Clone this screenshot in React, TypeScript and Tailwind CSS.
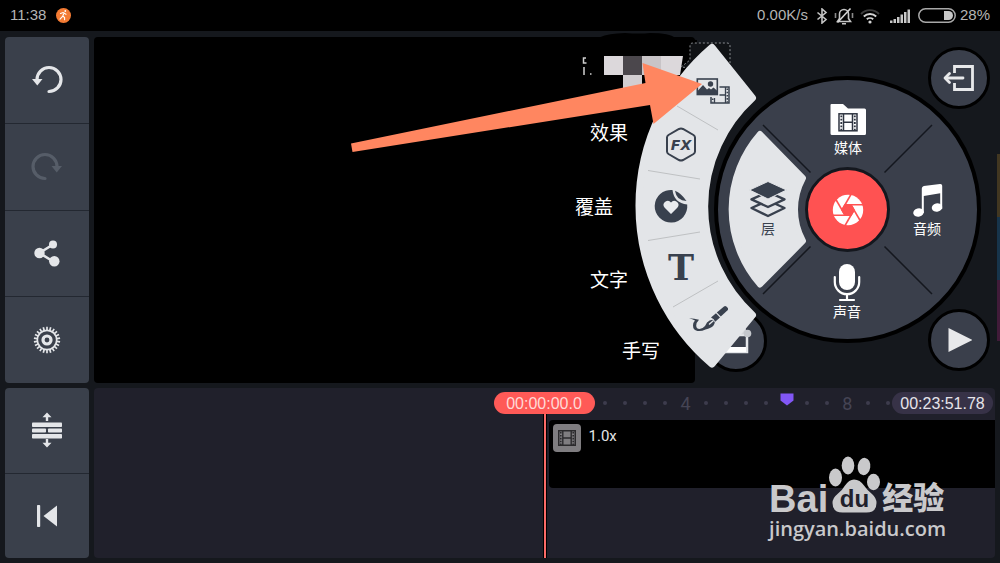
import React, { useState } from 'react';

interface IconProps {
  className?: string;
}

const UndoIcon: React.FC<IconProps> = ({ className }) => (
  <svg width="32" height="32" viewBox="0 0 32 32" className={className}>
    <path d="M18 27.5a12 12 0 1 0-12-12" fill="none" stroke="currentColor" strokeWidth="3.2" strokeLinecap="round" />
    <path d="M1 15h10.500l-5.200 6.500z" fill="currentColor" />
  </svg>
);

const ShareIcon = () => (
  <svg width="28" height="28" viewBox="0 0 28 28" fill="currentColor">
    <path d="M20 5.5L6.5 14 21 23" fill="none" stroke="currentColor" strokeWidth="2.6" />
    <circle cx="20" cy="5.5" r="4" />
    <circle cx="6.5" cy="14" r="5.2" />
    <circle cx="21.3" cy="22.3" r="5.2" />
  </svg>
);

const GearIcon = () => (
  <svg width="28" height="28" viewBox="0 0 28 28" fill="none" stroke="currentColor">
    {Array.from({ length: 22 }, (_, i) => (
      <path key={i} d="M14 0.8v3.4" strokeWidth="1.7" transform={`rotate(${(i * 360) / 22} 14 14)`} />
    ))}
    <circle cx="14" cy="14" r="9.7" strokeWidth="1.7" />
    <circle cx="14" cy="14" r="4" strokeWidth="3.2" />
  </svg>
);

const TrackHeightIcon = () => (
  <svg width="30" height="36" viewBox="0 0 30 36" fill="currentColor">
    <path d="M15 0.5l4.5 4.7h-3.3V9h-2.4V5.2h-3.3zM15 35.5l4.5-4.7h-3.3V27h-2.4v3.800h-3.3z" />
    <rect x="0" y="10.5" width="30" height="4.5" rx="0.8" />
    <rect x="0" y="16.5" width="14" height="4" rx="0.8" />
    <rect x="16" y="16.5" width="14" height="4" rx="0.8" />
    <rect x="0" y="22" width="30" height="4.5" rx="0.8" />
  </svg>
);

const ToStartIcon = () => (
  <svg width="22" height="22" viewBox="0 0 22 22" fill="currentColor">
    <rect x="1" y="0" width="3.2" height="22" rx="0.8" />
    <path d="M21 0.5v21L7.5 11z" />
  </svg>
);

const FilmIcon: React.FC<IconProps> = ({ className }) => (
  <svg width="18" height="16" viewBox="0 0 18 16" fill="none" stroke="currentColor" className={className}>
    <rect x="0.75" y="0.75" width="16.5" height="14.5" strokeWidth="1.5" />
    <path d="M4.8 1v14M13.2 1v14M5 8h8" strokeWidth="1.4" />
    <path d="M2.8 2v13M15.2 2v13" strokeWidth="1.6" strokeDasharray="1.6 1.3" />
  </svg>
);

// Wheel icons, all on a 40x36 canvas
const FolderIcon = () => (
  <svg width="40" height="36" viewBox="0 0 40 36">
    <path d="M3.5 4h11.5l5 4.5h16.5a1.5 1.5 0 0 1 1.5 1.5v23.5a1.5 1.5 0 0 1-1.5 1.5H4a1.5 1.5 0 0 1-1.5-1.5V5a1 1 0 0 1 1-1z" fill="#fff" />
    <g fill="none" stroke="#2f3541">
      <rect x="11" y="13.8" width="18" height="17" strokeWidth="1.5" />
      <path d="M15.5 14v17M24.5 14v17M15.5 22.3h9" strokeWidth="1.5" />
      <path d="M13.3 15.5v15M26.8 15.5v15" strokeWidth="1.8" strokeDasharray="1.8 1.5" />
    </g>
  </svg>
);

// Solid upper beam, hollow gap between the two stems
const MusicIcon = () => (
  <svg width="40" height="36" viewBox="0 0 40 36" fill="#fff">
    <path d="M14.8 7.5Q14.8 5.500 16.8 5L33 3q2.200-.2 2.200 1.800V28h-2V12.300L16.800 15v17h-2z" />
    <ellipse cx="11.5" cy="31.5" rx="5.300" ry="4.200" transform="rotate(-15 11.5 31.5)" />
    <ellipse cx="30" cy="26.5" rx="5.300" ry="4.200" transform="rotate(-15 30 26.5)" />
  </svg>
);

const MicIcon = () => (
  <svg width="40" height="36" viewBox="0 0 40 36" className="overflow-visible">
    <rect x="12" y="0" width="16" height="26" rx="8" fill="#fff" />
    <path d="M7.8 13v5a12.2 12.2 0 0 0 24.4 0v-5M20 30.5v5M13 36h14" fill="none" stroke="#fff" strokeWidth="2.2" strokeLinecap="round" />
  </svg>
);

const LayersIcon = () => (
  <svg width="40" height="36" viewBox="0 0 40 36" className="overflow-visible">
    <g stroke="#39414e" strokeWidth="2.4" fill="#e3e5e8" strokeLinejoin="round">
      <path d="M20 19.5L36.5 27 20 35 3.5 27z" />
      <path d="M20 11L36.5 18.3 20 26 3.5 18.3z" />
    </g>
    <path d="M20 0.5L38.5 9 20 18 1.5 9z" fill="#39414e" stroke="#e3e5e8" strokeWidth="1" />
  </svg>
);

// Fan icons, all on a 40x40 canvas
const LayerMediaIcon = () => (
  <svg width="40" height="40" viewBox="0 0 40 40">
    <g fill="none" stroke="#39414e">
      <rect x="18" y="16" width="18" height="16" strokeWidth="1.5" />
      <path d="M21.5 27v5M32.5 16v16M26 24h6" strokeWidth="1.3" />
      <path d="M19.7 27.5v4M34.3 17.5v14" strokeWidth="1.6" strokeDasharray="1.6 1.6" />
    </g>
    <rect x="3" y="7" width="23.5" height="19" fill="#e3e5e8" />
    <rect x="4.3" y="8" width="20" height="15.5" fill="#e3e5e8" stroke="#39414e" strokeWidth="1.6" />
    <path d="M5 19.5l5-5.5 4 4.5 2-1.5 2 1.5 2.5-2 4 3.5v4H5z" fill="#39414e" />
    <circle cx="17.5" cy="13" r="2.7" fill="#39414e" />
  </svg>
);

const EffectIcon = () => (
  <svg width="40" height="40" viewBox="0 0 40 40">
    <path d="M20 4.5q1 0 2 .5l10.500 6q1.500 1 1.500 2.500v14q0 1.500-1.500 2.500L22 36q-2 1-4 0L7.500 30Q6 29 6 27.500v-14Q6 12 7.500 11L18 5q1-.5 2-.5z" fill="none" stroke="#39414e" strokeWidth="2" />
    <text x="20" y="25.500" textAnchor="middle" fill="#39414e" fontSize="14" fontWeight="700" fontStyle="italic" fontFamily="DejaVu Sans, sans-serif">FX</text>
  </svg>
);

const StickerIcon = () => (
  <svg width="40" height="40" viewBox="0 0 40 40">
    <path d="M21.500 4A16.300 16.300 0 1 0 36.200 18.500Q23 17 21.500 4z" fill="#39414e" />
    <path d="M24 4.800Q30 7 35.500 15 25.500 15 24 4.800z" fill="#39414e" />
    <path d="M20 28l-6.500-6.500a4 4 0 0 1 6.500-5 4 4 0 0 1 6.500 5z" fill="#e9ebee" />
  </svg>
);

const TextIcon = () => (
  <svg width="40" height="40" viewBox="0 0 40 40">
    <text x="20" y="33" textAnchor="middle" fill="#39414e" fontSize="35" fontWeight="700" fontFamily="DejaVu Serif, Liberation Serif, serif">T</text>
  </svg>
);

const BrushIcon = () => (
  <svg width="40" height="40" viewBox="0 0 40 40" fill="#39414e">
    <path d="M1 17.200q5.500 0 10 1.600-3 3-2.800 6 .3 3.200 3.300 3.200 3 0 5.500-3l2-3.500q2.500-2.500 5.500-2.700l2.300 2.200q-.3 3.500-3.800 5.500-3 1.500-5.500 2-4 2-8 1.500-4.500-.8-4.500-5.500 0-3 2-5Q4.500 18 1 17.200z" />
    <path d="M23 16.500l5-4.200 4 4.200-4.800 4.300q-1-3-4.200-4.300z" />
    <path d="M28.800 11.500L36 5.400q1.200-.9 2.400.1l1.400 1.500q.8 1.200-.2 2.200L32.800 15.600z" />
    <path d="M21.500 23l3.500-3" stroke="#e3e5e8" strokeWidth="1.500" strokeLinecap="round" />
  </svg>
);

const ExitIcon = () => (
  <svg width="32" height="28" viewBox="0 0 32 28" fill="none" stroke="#e8e9eb" strokeWidth="2.8">
    <path d="M11.500 9V2.500h18v23h-18V19" />
    <path d="M3 14h17" strokeLinecap="round" />
    <path d="M6.500 9.500L2 14l4.500 4.500" strokeLinecap="round" strokeLinejoin="round" />
  </svg>
);

const ApertureIcon = () => (
  <svg width="32" height="32" viewBox="-16 -16 32 32">
    <circle r="15.2" fill="#fff" />
    <g stroke="#ff5252" strokeWidth="1.600" fill="#ff5252">
      <path d="M6 0L3 5.200h-6L-6 0l3-5.200h6z" />
      {[0, 60, 120, 180, 240, 300].map((deg) => (
        <path key={deg} d="M6 0L-3.200 16" transform={`rotate(${deg})`} />
      ))}
    </g>
  </svg>
);

const StatusBar = () => (
  <header className="flex h-[31px] items-center justify-between bg-black px-2.5 font-['Liberation_Sans',sans-serif] text-[15px] text-[#b4b4b4]">
    <div className="flex items-center gap-2.5">
      <span>11:38</span>
      <svg width="15" height="15" viewBox="0 0 15 15">
        <circle cx="7.5" cy="7.5" r="7.5" fill="#f47b33" />
        <path d="M4.500 5.500L7 4.500l3 1.800M8 4.800L6.800 8l1.800 1.500v2.300M6.800 8.200L4 11.200" fill="none" stroke="#fff" strokeWidth="1.100" strokeLinecap="round" />
        <circle cx="9.3" cy="3" r="0.9" fill="#fff" />
      </svg>
    </div>
    <div className="flex items-center">
      <span>0.00K/s</span>
      <svg width="12" height="16" viewBox="0 0 12 16" className="ml-2" fill="none" stroke="#c4c4c4" strokeWidth="1.6">
        <path d="M1.500 4.500l8.500 7-4 3.500V1l4 3.500-8.500 7" />
      </svg>
      <svg width="20" height="18" viewBox="0 0 20 18" className="ml-1.5" fill="none" stroke="#c4c4c4" strokeWidth="1.6">
        <path d="M3.500 14.500h13l-2-3V7a4.500 4.500 0 0 0-9 0v4.500zM8 16.800h4" />
        <path d="M1.500 6v5M18.500 6v5" stroke="#8a8a8a" />
        <path d="M16.500 1.500l-13 14" stroke="#d4d4d4" />
      </svg>
      <svg width="20" height="16" viewBox="0 0 20 16" className="ml-1.5" fill="none" stroke="#d4d4d4" strokeWidth="1.9">
        <path d="M1 6a12.500 12.500 0 0 1 18 0" stroke="#3c3c3c" />
        <path d="M3.800 8.500a9 9 0 0 1 12.400 0M6.800 11.300a4.800 4.800 0 0 1 6.400 0" />
        <circle cx="10" cy="14" r="1.6" fill="#d4d4d4" stroke="none" />
      </svg>
      <svg width="20" height="15" viewBox="0 0 20 15" className="ml-2.5" fill="#c8c8c8">
        <rect x="0" y="12.5" width="2.5" height="2.5" />
        <rect x="3.5" y="11" width="2.5" height="4" />
        <rect x="7" y="9" width="2.5" height="6" />
        <rect x="10.5" y="6.5" width="2.5" height="8.5" />
        <rect x="14" y="4" width="2.5" height="11" />
        <rect x="17.5" y="1.5" width="2.5" height="13.5" />
      </svg>
      <svg width="38" height="15" viewBox="0 0 38 15" className="ml-2 mr-1">
        <rect x="0.8" y="0.8" width="36.4" height="13.4" rx="6.7" fill="none" stroke="#a8a8a8" strokeWidth="1.5" />
        <path d="M26 3h4.500a4.500 4.500 0 0 1 0 9H26z" fill="#c8c8c8" />
      </svg>
      <span>28%</span>
    </div>
  </header>
);

const toolButton =
  'flex flex-1 items-center justify-center border-b border-[#232831] bg-[#3a404b] text-[#e4e6e9] last:border-b-0';

const fanItems = [
  { id: 'effect', label: '效果', Icon: EffectIcon, button: 'left-[321px] top-[93px]', text: 'left-[250px] top-[91px]' },
  { id: 'overlay', label: '覆盖', Icon: StickerIcon, button: 'left-[311px] top-[155px]', text: 'left-[235px] top-[165px]' },
  { id: 'text', label: '文字', Icon: TextIcon, button: 'left-[321px] top-[216px]', text: 'left-[250px] top-[238px]' },
  { id: 'handwriting', label: '手写', Icon: BrushIcon, button: 'left-[348px] top-[270px]', text: 'left-[282px] top-[309px]' },
];

const wheelItems = [
  { id: 'media', label: '媒体', Icon: FolderIcon, position: 'left-[476px] top-[69px] text-white' },
  { id: 'audio', label: '音频', Icon: MusicIcon, position: 'left-[555px] top-[150px] text-white' },
  { id: 'voice', label: '声音', Icon: MicIcon, position: 'left-[475px] top-[233px] text-white' },
  { id: 'layer', label: '层', Icon: LayersIcon, position: 'left-[396px] top-[150px] text-[#39414e]' },
];

const roundButton =
  'absolute flex h-[62px] w-[62px] items-center justify-center rounded-full border-[3px] border-black bg-[#3a3f4b]';

const RadialMenu = () => (
  <div className="pointer-events-none absolute right-0 top-0 h-[354px] w-[660px]">
    {/* Mosaic and painted-over label */}
    <svg className="absolute inset-0" width="660" height="354" viewBox="340 31 660 354">
      <path d="M590 48Q592 34 625 33q15 1 25 0 20 0 25 5l22 2v25H590z" fill="#000" />
      <path d="M586 58h-2.500v5h3M584 67v8M590 74h1.500" stroke="#d0d0d0" strokeWidth="1.500" fill="none" />
      <rect x="604" y="56" width="19" height="19" fill="#dcd8db" />
      <rect x="623" y="56" width="19" height="19" fill="#4b474c" />
      <rect x="642" y="56" width="19" height="19" fill="#c8c4c7" />
      <path d="M661 56h22l-3 19h-19z" fill="#dcd8db" />
      <rect x="623" y="75" width="19" height="20" fill="#d2ced1" />
      <path d="M681 67l9-7V46q0-3 3-3h34q3 0 3 3v22h-40z" fill="#101215" stroke="#8b8e92" strokeDasharray="2 2" />
      <rect x="997" y="154" width="3" height="63" fill="#423721" />
      <rect x="997" y="217" width="3" height="63" fill="#17344b" />
      <rect x="997" y="280" width="3" height="61" fill="#411b39" />
    </svg>

    <button aria-label="Capture frame" className={`${roundButton} pointer-events-auto left-[365px] top-[279px]`}>
      <svg width="32" height="32" viewBox="0 0 32 32">
        <path d="M4 10h23v17H4z" fill="none" stroke="#e4e6e9" strokeWidth="2.500" />
        <path d="M4 22h22v5H4z" fill="#fff" />
        <circle cx="22" cy="5.5" r="4" fill="#d4d6da" />
        <circle cx="27.5" cy="8.500" r="3.800" fill="#c4c7cc" />
      </svg>
    </button>

    {/* Wheel, selected slice and fan */}
    <svg className="absolute inset-0" width="660" height="354" viewBox="340 31 660 354">
      <circle cx="847.5" cy="209.5" r="131.5" fill="#3a3f4b" stroke="#000" strokeWidth="4" />
      <path d="M763 125l47.500 47.500M932 125l-47.500 47.500M763 294l47.500-47.500M932 294l-47.500-47.500" stroke="#14171e" strokeWidth="1.5" />
      <path
        d="M760 134L803 178A66 66 0 0 0 803 241L760 284.500A114 114 0 0 1 760 134z"
        fill="#e3e5e8" stroke="#e3e5e8" strokeWidth="6" strokeLinejoin="round"
      />
      <path
        d="M712 47.500L752.500 98A147 147 0 0 0 752.500 315L712 364A208 208 0 0 1 712 47.500z"
        fill="#e3e5e8" stroke="#e3e5e8" strokeWidth="7" strokeLinejoin="round"
      />
      <path d="M677 106l41 24M648 170.500l52 8.500M648 240.500l52-8.500M673 307l45-26" stroke="#bfc1c3" strokeWidth="1" />
    </svg>

    <button aria-label="Exit" className={`${roundButton} pointer-events-auto left-[588px] top-[16px]`}>
      <ExitIcon />
    </button>
    <button aria-label="Play" className={`${roundButton} pointer-events-auto left-[588px] top-[278px]`}>
      <svg width="26" height="26" viewBox="0 0 26 26" fill="#e8e9eb">
        <path d="M2.500 1l24 12-24 12z" />
      </svg>
    </button>

    <button aria-label="Layer media" className="pointer-events-auto absolute left-[353px] top-[40px]">
      <LayerMediaIcon />
    </button>
    {fanItems.map(({ id, label, Icon, button, text }) => (
      <React.Fragment key={id}>
        <label htmlFor={id} className={`absolute text-[19px] leading-6 text-white ${text}`}>
          {label}
        </label>
        <button id={id} className={`pointer-events-auto absolute ${button}`}>
          <Icon />
        </button>
      </React.Fragment>
    ))}

    {wheelItems.map(({ id, label, Icon, position }) => (
      <button
        key={id}
        className={`pointer-events-auto absolute flex w-16 flex-col items-center gap-0.5 text-[14px] leading-5 ${position}`}
      >
        <Icon />
        {label}
      </button>
    ))}

    <button
      aria-label="Record"
      className="pointer-events-auto absolute left-[465px] top-[136px] flex h-[85px] w-[85px] items-center justify-center rounded-full border-[3px] border-[#14171e] bg-[#ff5252]"
    >
      <ApertureIcon />
    </button>

    {/* Pointer arrow */}
    <svg className="absolute inset-0" width="660" height="354" viewBox="340 31 660 354">
      <path d="M351 143.500L645.500 83l-3-20L702 84l-48.500 40-3.500-19-297.500 47z" fill="#ff8660" />
    </svg>
  </div>
);

const marks = ['', '', '', '', '4', '', '', '', '', 'marker', '', '', '8', '', ''];

const timePill =
  "z-10 h-[22px] w-[101px] shrink-0 rounded-full text-center font-['Liberation_Sans',sans-serif] text-[16px] leading-6";

const Timeline = () => (
  <section className="relative overflow-hidden rounded bg-[#20202b]">
    <div className="flex h-8 items-center pb-0.5 pl-[calc(50%-51px)] pr-0.5">
      <span className={`${timePill} bg-[#ff5a57] text-[#ffd9d6]`}>00:00:00.0</span>
      <div className="-mr-1.5 flex flex-1 items-center text-[18px] text-[#454454]">
        {marks.map((mark, i) => (
          <span key={i} className="flex h-6 flex-1 items-center justify-center">
            {mark === '' && <i className="h-1 w-1 rounded-full bg-[#3d3b4d]" />}
            {mark === 'marker' && (
              <svg width="14" height="20" viewBox="0 0 14 20">
                <path d="M0.500 0.500h13v7L7 12.500 .5 7.500z" fill="#8257f5" />
              </svg>
            )}
            {mark !== '' && mark !== 'marker' && mark}
          </span>
        ))}
      </div>
      <span className={`${timePill} bg-[#373247] text-[#e6e4ea]`}>00:23:51.78</span>
    </div>
    <div className="ml-[calc(50%+4px)] flex h-[68px] items-start gap-2 rounded-l bg-black p-1 text-[15px] text-[#e6e6e6]">
      <span className="flex h-7 w-7 items-center justify-center rounded-sm bg-[#7f7d80] text-[#2b2a2c]">
        <FilmIcon />
      </span>
      <span className="leading-6">1.0x</span>
    </div>
    <div className="absolute bottom-0 left-1/2 top-6 w-1 -translate-x-1/2 border-x border-black bg-[#fb6a67]" />
  </section>
);

const Watermark = () => (
  <div className="pointer-events-none absolute bottom-[20px] right-[54px] text-[#c9c9cb]">
    <div className="flex items-end">
      <span className="font-['Liberation_Sans',sans-serif] text-[38px] font-bold leading-8">Bai</span>
      <svg width="52" height="60" viewBox="828 455 52 60" fill="currentColor">
        <ellipse cx="835.5" cy="477.5" rx="6.500" ry="9" />
        <ellipse cx="848" cy="465.5" rx="6.300" ry="9" />
        <ellipse cx="864" cy="466.5" rx="6.300" ry="8.700" transform="rotate(8 864 466.5)" />
        <ellipse cx="873.5" cy="482" rx="6.500" ry="8.300" />
        <path d="M854 479.500q6 0 10 6 3 4.500 8 8.500 4.500 4 4.500 9 0 9.500-10 9.500h-24q-10 0-10-9.500 0-5 5-9 5-4 7.500-8.500 4-6 9-6z" />
        <text x="854.5" y="507" textAnchor="middle" fontSize="24" fontWeight="700" fontFamily="Liberation Sans, sans-serif" fill="#20202b">du</text>
      </svg>
      <span className="ml-0.5 text-[31px] font-black leading-8">经验</span>
    </div>
    <div className="font-['Open_Sans',sans-serif] text-[20px] font-semibold leading-7">jingyan.baidu.com</div>
  </div>
);

const App: React.FC = () => {
  const [canRedo] = useState(false);

  return (
    <div className="relative flex min-h-screen flex-col bg-[#15181d] font-[Roboto,'Noto_Sans_CJK_SC',sans-serif]">
      <StatusBar />
      <main className="relative grid flex-1 grid-cols-[84px_1fr] grid-rows-[346fr_170fr] gap-[5px] px-[5px] pb-[5px] pt-[6px]">
        <nav className="flex flex-col overflow-hidden rounded">
          <button aria-label="Undo" className={toolButton}>
            <UndoIcon />
          </button>
          <button aria-label="Redo" disabled={!canRedo} className={toolButton}>
            <UndoIcon className="-scale-x-100 text-[#565d68]" />
          </button>
          <button aria-label="Share" className={toolButton}>
            <ShareIcon />
          </button>
          <button aria-label="Settings" className={toolButton}>
            <GearIcon />
          </button>
        </nav>
        <section className="mr-[300px] rounded bg-black" />
        <nav className="flex flex-col overflow-hidden rounded">
          <button aria-label="Track height" className={toolButton}>
            <TrackHeightIcon />
          </button>
          <button aria-label="Jump to start" className={toolButton}>
            <ToStartIcon />
          </button>
        </nav>
        <Timeline />
        <RadialMenu />
      </main>
      <Watermark />
    </div>
  );
};

export default App;
